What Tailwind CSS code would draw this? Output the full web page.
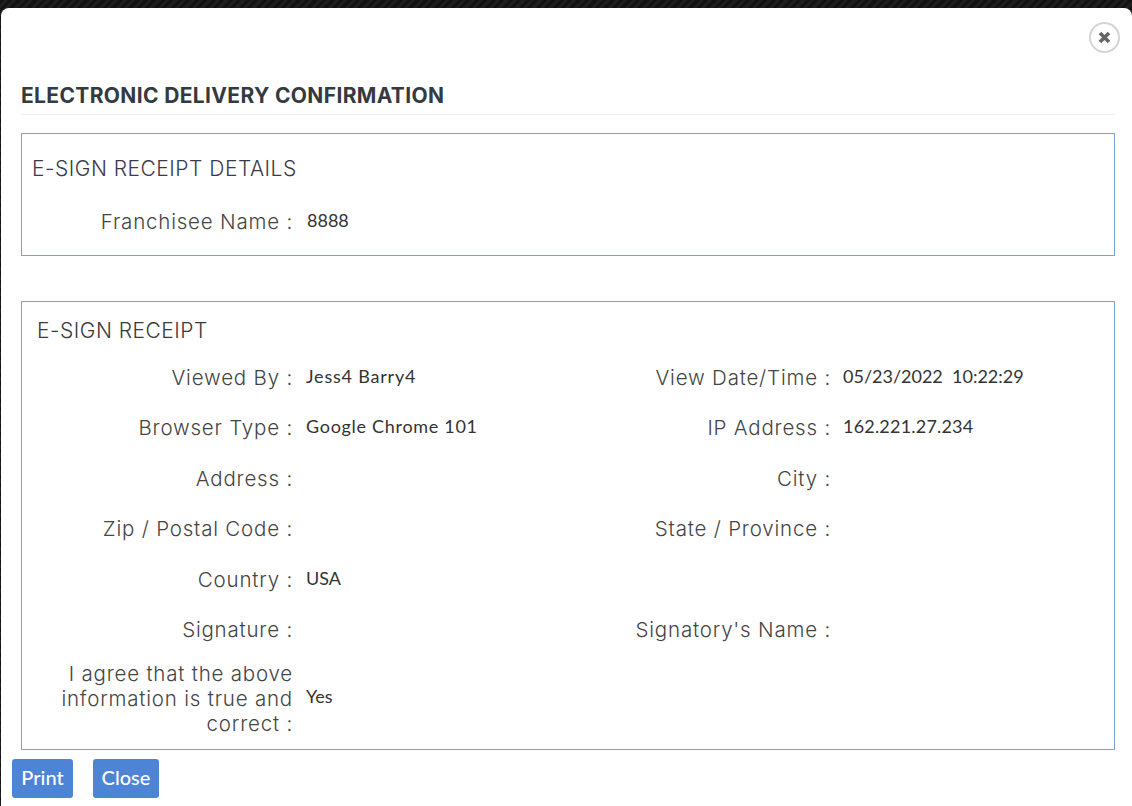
<!DOCTYPE html>
<html lang="en">
<head>
    <meta charset="UTF-8">
    <title>Electronic Delivery Confirmation</title>
    <script src="https://cdn.jsdelivr.net/npm/@tailwindcss/browser@4"></script>
</head>
<body class="bg-[#1c1c1c] bg-[repeating-linear-gradient(135deg,#121212_0px,#121212_3px,#1e1e1e_3px,#1e1e1e_6px)] h-[806px] w-[1132px] overflow-hidden font-['Inter','Liberation_Sans',sans-serif]">
    <div class="mt-2 ml-px h-[798px] bg-white rounded-tl-lg rounded-tr-lg relative">
        <!-- close button -->
        <button class="absolute right-[12px] top-[14px] w-[31px] h-[31px] rounded-full border-2 border-[#d4d4d4] flex items-center justify-center">
            <svg width="15" height="15" viewBox="0 0 15 15"><path d="M3 3l9 9M12 3l-9 9" stroke="#666" stroke-width="3.6" fill="none"/></svg>
        </button>

        <div class="pl-5 pr-[17px] pt-[74px]">
            <h1 class="h-[33px] border-b border-[#eeeeee] text-[21px] leading-[27px] font-bold text-[#333a40] tracking-[0.35px]">ELECTRONIC DELIVERY CONFIRMATION</h1>

            <!-- details -->
            <div class="mt-[18px] h-[123px] border border-[#7c9fd6] pl-[10px] pt-[23px]">
                <h2 class="text-[21px] leading-[24px] font-light text-[#3a3a4a] tracking-[0.5px]">E-SIGN RECEIPT DETAILS</h2>
                <div class="flex mt-[29px]">
                    <div class="w-[261px] text-right text-[20.5px] leading-[24px] font-light text-[#444] tracking-[0.8px]">Franchisee Name :</div>
                    <div class="ml-[14px] -mt-[2px] font-['Lato',sans-serif] text-[18px] leading-[24px] text-[#333]">8888</div>
                </div>
            </div>

            <!-- receipt -->
            <div class="mt-[45px] h-[449px] border border-[#7c9fd6] pl-[15px] pt-[17px]">
                <h2 class="text-[21px] leading-[24px] font-light text-[#3a3a3a] tracking-[0.5px]">E-SIGN RECEIPT</h2>
                <div class="mt-[9.3px] grid grid-cols-[256px_297px_241px_1fr] auto-rows-[50.4px] items-center text-[20.5px] leading-[25px] font-light text-[#444] tracking-[0.8px]">
                    <div class="text-right">Viewed By :</div>
                    <div class="pl-[13px] -mt-[2px] font-['Lato',sans-serif] text-[18px] font-normal text-[#333] tracking-[0.8px]">Jess4 Barry4</div>
                    <div class="text-right">View Date/Time :</div>
                    <div class="pl-[12px] -mt-[2px] font-['Lato',sans-serif] text-[18px] font-normal text-[#333] tracking-normal">05/23/2022&nbsp; 10:22:29</div>

                    <div class="text-right">Browser Type :</div>
                    <div class="pl-[13px] -mt-[2px] font-['Lato',sans-serif] text-[18px] font-normal text-[#333] tracking-[0.7px]">Google Chrome 101</div>
                    <div class="text-right">IP Address :</div>
                    <div class="pl-[12px] -mt-[2px] font-['Lato',sans-serif] text-[18px] font-normal text-[#333] tracking-[0.2px]">162.221.27.234</div>

                    <div class="text-right">Address :</div>
                    <div></div>
                    <div class="text-right">City :</div>
                    <div></div>

                    <div class="text-right">Zip / Postal Code :</div>
                    <div></div>
                    <div class="text-right">State / Province :</div>
                    <div></div>

                    <div class="text-right">Country :</div>
                    <div class="pl-[13px] -mt-[2px] font-['Lato',sans-serif] text-[18px] font-normal text-[#333] tracking-normal">USA</div>
                    <div></div>
                    <div></div>

                    <div class="text-right">Signature :</div>
                    <div></div>
                    <div class="text-right">Signatory's Name :</div>
                    <div></div>
                </div>
                <div class="flex items-center mt-[6px]">
                    <div class="w-[256px] pl-[10px] text-right text-[20.5px] leading-[25px] font-light text-[#444] tracking-[0.8px]">I agree that the above information is true and correct :</div>
                    <div class="pl-[13px] -mt-[4px] font-['Lato',sans-serif] text-[18px] text-[#333]">Yes</div>
                </div>
            </div>
        </div>

        <div class="flex gap-5 pl-[11px] mt-[9px]">
            <button class="h-[39px] w-[61px] pb-[3px] bg-[#4d84d6] rounded-[3px] text-white text-[20px] font-medium font-['Lato',sans-serif]">Print</button>
            <button class="h-[39px] w-[66px] pb-[3px] bg-[#4d84d6] rounded-[3px] text-white text-[20px] font-medium font-['Lato',sans-serif]">Close</button>
        </div>
    </div>
</body>
</html>
